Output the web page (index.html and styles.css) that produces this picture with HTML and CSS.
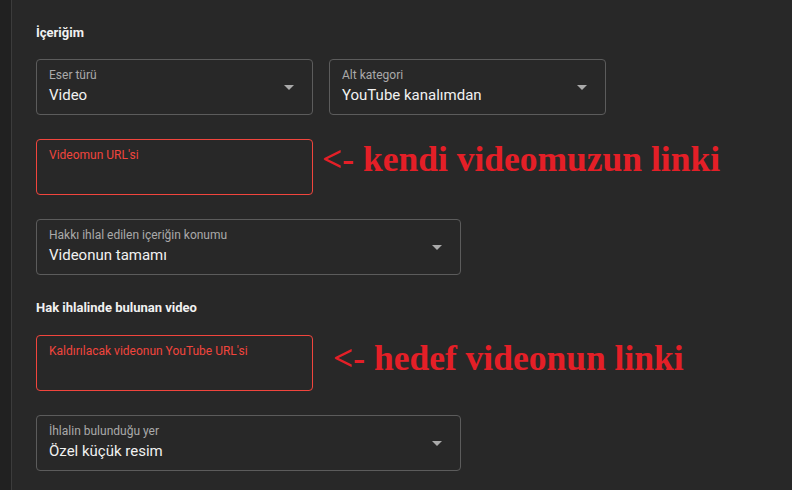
FILE: index.html
```html
<!DOCTYPE html>
<html lang="tr">
<head>
<meta charset="utf-8">
<title>İçeriğim</title>
<link rel="stylesheet" href="styles.css">
</head>
<body>
<div class="page">
  <div class="rail"></div>
  <main class="main">
    <h2 class="heading">İçeriğim</h2>
    <div class="row">
      <div class="field select narrow">
        <div class="label">Eser türü</div>
        <div class="value">Video</div>
        <span class="arrow"></span>
      </div>
      <div class="field select narrow">
        <div class="label">Alt kategori</div>
        <div class="value">YouTube kanalımdan</div>
        <span class="arrow"></span>
      </div>
    </div>
    <div class="row url-row">
      <div class="field error narrow">
        <div class="label">Videomun URL'si</div>
      </div>
      <div class="note note-one">&lt;- kendi videomuzun linki</div>
    </div>
    <div class="row">
      <div class="field select wide">
        <div class="label">Hakkı ihlal edilen içeriğin konumu</div>
        <div class="value">Videonun tamamı</div>
        <span class="arrow"></span>
      </div>
    </div>
    <h2 class="heading second">Hak ihlalinde bulunan video</h2>
    <div class="row url-row">
      <div class="field error narrow">
        <div class="label">Kaldırılacak videonun YouTube URL'si</div>
      </div>
      <div class="note note-two">&lt;- hedef videonun linki</div>
    </div>
    <div class="row">
      <div class="field select wide">
        <div class="label">İhlalin bulunduğu yer</div>
        <div class="value">Özel küçük resim</div>
        <span class="arrow"></span>
      </div>
    </div>
  </main>
</div>
</body>
</html>
```

FILE: styles.css
```css
html, body {
  margin: 0;
  padding: 0;
  background: #282828;
  height: 100%;
  overflow: hidden;
}

.page {
  display: flex;
  min-height: 100%;
  font-family: Roboto, "Liberation Sans", Arial, sans-serif;
}

.rail {
  width: 11px;
  flex: none;
  background: #212121;
  border-right: 1px solid #3c3c3c;
}

.main {
  flex: 1;
  padding: 25px 0 0 24px;
  display: flex;
  flex-direction: column;
}

.heading {
  margin: 0 0 18px;
  font-size: 13px;
  line-height: 16px;
  font-weight: 700;
  color: #f1f1f1;
}

.heading.second {
  margin: 1px 0 19px;
}

.row {
  display: flex;
  gap: 16px;
  margin-bottom: 24px;
}

.url-row {
  gap: 0;
  align-items: flex-start;
}

.field {
  position: relative;
  box-sizing: border-box;
  height: 56px;
  border: 1px solid #5c5c5c;
  border-radius: 4px;
  padding: 7px 12px 0 12px;
}

.narrow {
  width: 277px;
}

.wide {
  width: 425px;
}

.label {
  font-size: 12px;
  line-height: 16px;
  color: #aaaaaa;
}

.value {
  margin-top: 2px;
  font-size: 15px;
  line-height: 20px;
  color: #f1f1f1;
}

.field.error {
  border-color: #f1453d;
}

.field.error .label {
  color: #f1453d;
}

.arrow {
  position: absolute;
  right: 18px;
  top: 25px;
  width: 0;
  height: 0;
  border-left: 5px solid transparent;
  border-right: 5px solid transparent;
  border-top: 5px solid #aaaaaa;
}

.note {
  font-family: "Liberation Serif", "Times New Roman", serif;
  font-weight: 700;
  font-size: 35.5px;
  line-height: 40px;
  color: #e41f27;
  white-space: nowrap;
}

.note-one {
  margin: 0 0 0 9px;
}

.note-two {
  margin: 3px 0 0 20px;
}
```
